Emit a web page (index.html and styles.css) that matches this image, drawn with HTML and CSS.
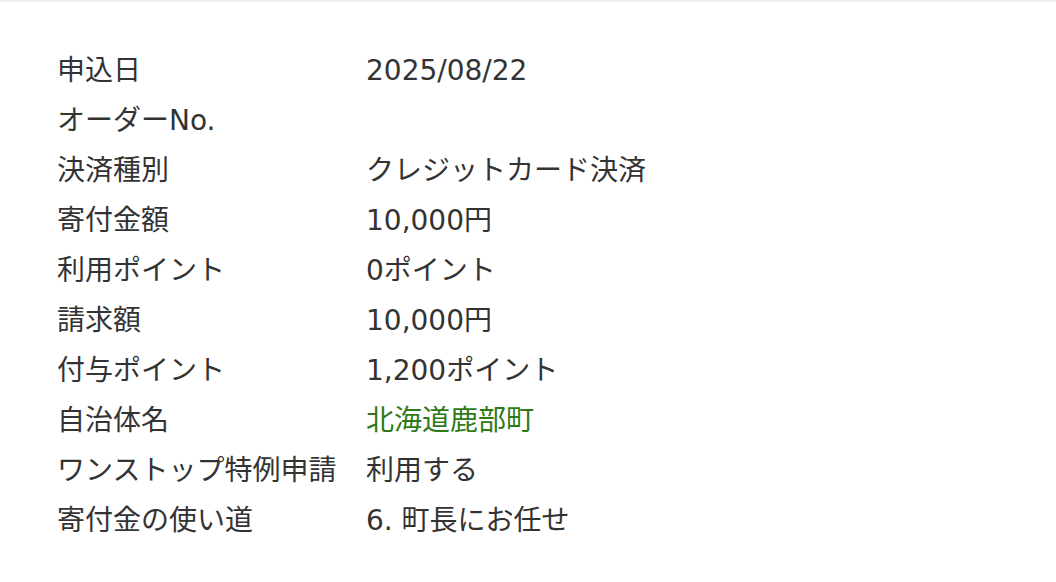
FILE: index.html
```html
<!DOCTYPE html>
<html lang="ja">
<head>
<meta charset="utf-8">
<link rel="stylesheet" href="styles.css">
</head>
<body>
<div class="topline"></div>
<dl class="info">
  <dt>申込日</dt><dd>2025/08/22</dd>
  <dt>オーダーNo.</dt><dd></dd>
  <dt>決済種別</dt><dd>クレジットカード決済</dd>
  <dt>寄付金額</dt><dd>10,000円</dd>
  <dt>利用ポイント</dt><dd>0ポイント</dd>
  <dt>請求額</dt><dd>10,000円</dd>
  <dt>付与ポイント</dt><dd>1,200ポイント</dd>
  <dt>自治体名</dt><dd class="link">北海道鹿部町</dd>
  <dt>ワンストップ特例申請</dt><dd>利用する</dd>
  <dt>寄付金の使い道</dt><dd>6. 町長にお任せ</dd>
</dl>
</body>
</html>
```
FILE: styles.css
```css
html, body {
  margin: 0;
  padding: 0;
  background: #fff;
}
body {
  font-family: "DejaVu Sans", "Noto Sans CJK JP", sans-serif;
  color: #333;
}
.topline {
  height: 2px;
  background: #eeeeee;
}
.info {
  margin: 0;
  padding: 44px 0 0 57px;
  display: grid;
  grid-template-columns: 309px 1fr;
  grid-auto-rows: 50px;
  font-size: 28px;
  line-height: 50px;
}
.info dt, .info dd {
  margin: 0;
  white-space: nowrap;
}
.info .link {
  color: #2f7a17;
}
```
